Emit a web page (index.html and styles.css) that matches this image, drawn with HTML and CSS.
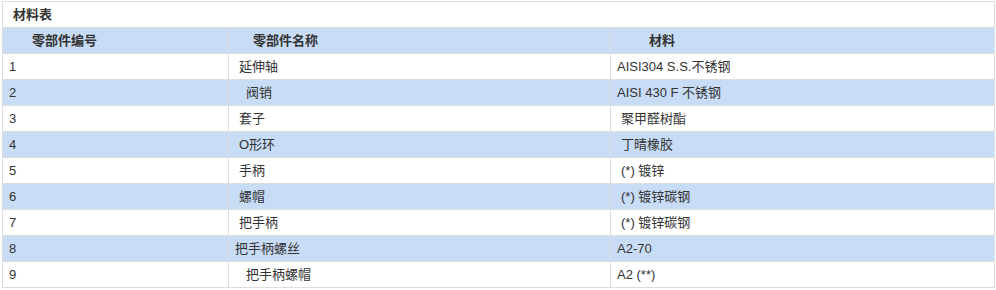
FILE: index.html
```html
<!DOCTYPE html>
<html lang="zh-CN">
<head>
<meta charset="utf-8">
<title>材料表</title>
<link rel="stylesheet" href="styles.css">
</head>
<body>
<div class="wrap">
<table class="mat">
<colgroup><col class="c1"><col class="c2"><col class="c3"></colgroup>
<tr class="title"><td colspan="3">材料表</td></tr>
<tr class="head"><th class="h1">零部件编号</th><th class="h2">零部件名称</th><th class="h3">材料</th></tr>
<tr><td>1</td><td class="i1">延伸轴</td><td>AISI304 S.S.不锈钢</td></tr>
<tr class="alt"><td>2</td><td class="i3">阀销</td><td>AISI 430 F 不锈钢</td></tr>
<tr><td>3</td><td class="i1">套子</td><td class="i1">聚甲醛树酯</td></tr>
<tr class="alt"><td>4</td><td class="i1">O形环</td><td class="i1">丁晴橡胶</td></tr>
<tr><td>5</td><td class="i1">手柄</td><td class="i1">(*) 镀锌</td></tr>
<tr class="alt"><td>6</td><td class="i1">螺帽</td><td class="i1">(*) 镀锌碳钢</td></tr>
<tr><td>7</td><td class="i1">把手柄</td><td class="i1">(*) 镀锌碳钢</td></tr>
<tr class="alt"><td>8</td><td>把手柄螺丝</td><td>A2-70</td></tr>
<tr><td>9</td><td class="i3">把手柄螺帽</td><td>A2 (**)</td></tr>
</table>
</div>
</body>
</html>
```
FILE: styles.css
```css
html, body {
  margin: 0;
  padding: 0;
  background: #fff;
}
.wrap {
  padding: 1px 0 0 2px;
}
.mat {
  border-collapse: collapse;
  table-layout: fixed;
  width: 992px;
  font-family: "Liberation Sans", "Noto Sans CJK SC", sans-serif;
  font-size: 13px;
  color: #333;
}
.c1 { width: 226px; }
.c2 { width: 382px; }
.c3 { width: 384px; }
.mat td, .mat th {
  border: 1px solid #ddd;
  height: 25px;
  padding: 0 6px;
  text-align: left;
  vertical-align: middle;
  white-space: nowrap;
  line-height: 16px;
}
.mat .title td {
  padding-left: 10px;
  background: #fff;
  font-weight: bold;
}
.head th {
  background: #c8dcf6;
  font-weight: bold;
}
.h1 { padding-left: 29px !important; }
.h2 { padding-left: 24px !important; }
.h3 { padding-left: 38px !important; }
.alt td { background: #c8dcf6; }
.mat .i1 { padding-left: 10px; }
.mat .i3 { padding-left: 17px; }
```
